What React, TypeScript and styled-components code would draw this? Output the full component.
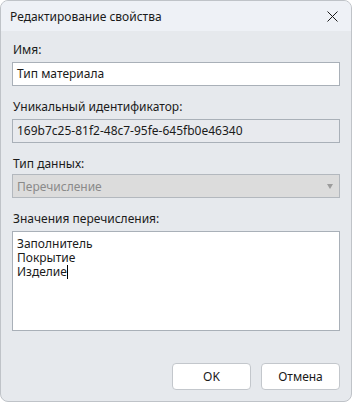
import styled, { createGlobalStyle } from 'styled-components';

const GlobalStyle = createGlobalStyle`
	html, body {
		margin: 0;
		padding: 0;
		background: #ffffff;
	}
	* {
		box-sizing: border-box;
	}
`;

const Window = styled.div`
	width: 352px;
	height: 402px;
	display: flex;
	flex-direction: column;
	border: 1px solid #bfc3c8;
	border-radius: 8px;
	overflow: hidden;
	background: #e6e9ed;
	font-family: 'Segoe UI', 'Noto Sans', sans-serif;
	font-size: 12px;
	color: #1b1b1b;
`;

const TitleBar = styled.div`
	height: 30px;
	flex: none;
	display: flex;
	align-items: center;
	justify-content: space-between;
	padding: 0 9px 0 9px;
	background: #eef1f6;
`;

const Title = styled.span`
	font-size: 12px;
	color: #1a1a1a;
`;

const CloseButton = styled.button`
	width: 20px;
	height: 20px;
	padding: 0;
	border: none;
	background: transparent;
	display: flex;
	align-items: center;
	justify-content: center;
`;

const Content = styled.div`
	flex: 1;
	display: flex;
	flex-direction: column;
	padding: 11px 11px 0 11px;
`;

const Field = styled.div`
	display: flex;
	flex-direction: column;
	margin-bottom: 13px;
`;

const Label = styled.label<{ tight?: boolean }>`
	line-height: 16px;
	height: 16px;
	margin-bottom: ${(props) => (props.tight ? '2px' : '4px')};
	padding-left: 1px;
`;

const TextInput = styled.div<{ readOnly?: boolean }>`
	height: 24px;
	line-height: 22px;
	padding: 0 4px;
	border: 1px solid #a9b0b8;
	background: ${(props) => (props.readOnly ? '#e8eaee' : '#ffffff')};
	white-space: nowrap;
	overflow: hidden;
`;

const Select = styled.div`
	height: 24px;
	display: flex;
	align-items: center;
	justify-content: space-between;
	padding: 0 6px 0 4px;
	border: 1px solid #b3b8be;
	background: #dcdcdc;
	color: #8a8a8a;
`;

const Arrow = styled.span`
	width: 0;
	height: 0;
	border-left: 3.5px solid transparent;
	border-right: 3.5px solid transparent;
	border-top: 5px solid #9c9c9c;
`;

const TextArea = styled.div`
	height: 100px;
	padding: 5px 4px;
	border: 1px solid #a9b0b8;
	background: #ffffff;
`;

const Line = styled.div`
	height: 14px;
	line-height: 14px;
`;

const Caret = styled.span`
	display: inline-block;
	width: 1px;
	height: 14px;
	background: #000000;
	vertical-align: -3px;
`;

const Footer = styled.div`
	margin-top: auto;
	display: flex;
	justify-content: flex-end;
	gap: 10px;
	padding: 0 11px 11px 0;
`;

const Button = styled.button`
	width: 79px;
	height: 27px;
	border: 1px solid #c3c7cc;
	border-radius: 4px;
	background: #ffffff;
	font-family: inherit;
	font-size: 12px;
	color: #1a1a1a;
	padding: 0;
`;

function App() {
	const values = ['Заполнитель', 'Покрытие', 'Изделие'];

	return (
		<>
			<GlobalStyle />
			<Window>
				<TitleBar>
					<Title>Редактирование свойства</Title>
					<CloseButton>
						<svg width="11" height="11" viewBox="0 0 11 11">
							<path d="M0.5 0.5 L10.5 10.5 M10.5 0.5 L0.5 10.5" stroke="#1a1a1a" strokeWidth="1" />
						</svg>
					</CloseButton>
				</TitleBar>
				<Content>
					<Field>
						<Label>Имя:</Label>
						<TextInput>Тип материала</TextInput>
					</Field>
					<Field>
						<Label>Уникальный идентификатор:</Label>
						<TextInput readOnly>169b7c25-81f2-48c7-95fe-645fb0e46340</TextInput>
					</Field>
					<Field>
						<Label tight>Тип данных:</Label>
						<Select>
							Перечисление
							<Arrow />
						</Select>
					</Field>
					<Field>
						<Label>Значения перечисления:</Label>
						<TextArea>
							{values.map((value, i) => (
								<Line key={value}>
									{value}
									{i === values.length - 1 && <Caret />}
								</Line>
							))}
						</TextArea>
					</Field>
				</Content>
				<Footer>
					<Button>OK</Button>
					<Button>Отмена</Button>
				</Footer>
			</Window>
		</>
	);
}

export default App;
